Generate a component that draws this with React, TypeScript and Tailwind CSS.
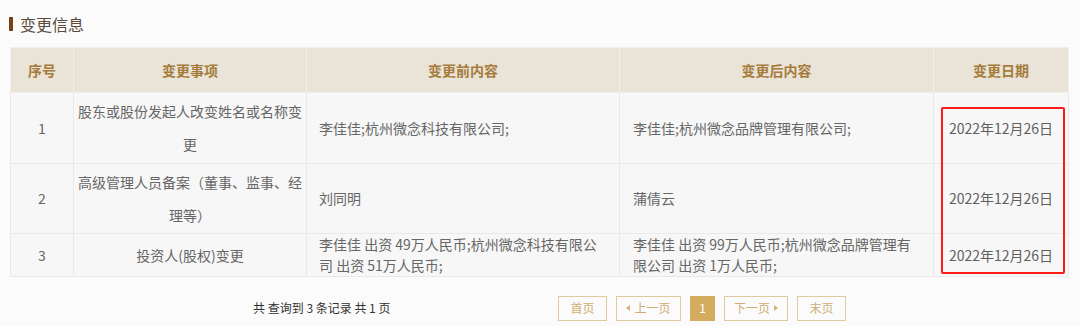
import React from 'react';

const rows = [
  {
    no: '1',
    item: '股东或股份发起人改变姓名或名称变更',
    before: '李佳佳;杭州微念科技有限公司;',
    after: '李佳佳;杭州微念品牌管理有限公司;',
    date: '2022年12月26日',
    h: 'h-[71px]',
  },
  {
    no: '2',
    item: '高级管理人员备案（董事、监事、经理等）',
    before: '刘同明',
    after: '蒲倩云',
    date: '2022年12月26日',
    h: 'h-[70px]',
  },
  {
    no: '3',
    item: '投资人(股权)变更',
    before: '李佳佳 出资 49万人民币;杭州微念科技有限公司 出资 51万人民币;',
    after: '李佳佳 出资 99万人民币;杭州微念品牌管理有限公司 出资 1万人民币;',
    date: '2022年12月26日',
    h: 'h-[43px]',
  },
];

const Arrow: React.FC<{ dir: 'left' | 'right' }> = ({ dir }) => (
  <svg width="4" height="6" viewBox="0 0 4 6" className="fill-[#d2b27a]">
    {dir === 'left' ? <path d="M4 0 L0 3 L4 6 Z" /> : <path d="M0 0 L4 3 L0 6 Z" />}
  </svg>
);

export default function App() {
  return (
    <div
      className="w-[1080px] h-[326px] bg-[#fbfbfb] overflow-hidden"
      style={{ fontFamily: '"Noto Sans CJK SC", "Noto Sans", sans-serif' }}
    >
      {/* Section title */}
      <div className="flex items-center gap-[7px] pl-[9px] pt-[14px] h-[34px]">
        <span className="block w-[4px] h-[14px] bg-[#7b3f12]" />
        <h3 className="text-[16px] leading-[20px] text-[#5a4b3e]">变更信息</h3>
      </div>

      {/* Change table */}
      <div className="relative mx-[10px] mt-[13px] w-[1058px]">
        <table className="w-[1058px] table-fixed border-collapse text-[14px]">
          <colgroup>
            <col className="w-[63px]" />
            <col className="w-[233px]" />
            <col className="w-[313px]" />
            <col className="w-[314px]" />
            <col className="w-[135px]" />
          </colgroup>
          <thead>
            <tr className="h-[45px] bg-[#e9e3d8] text-[#a57b3a] font-bold">
              <th className="border border-[#f3efe8] font-bold">序号</th>
              <th className="border border-[#f3efe8] font-bold">变更事项</th>
              <th className="border border-[#f3efe8] font-bold">变更前内容</th>
              <th className="border border-[#f3efe8] font-bold">变更后内容</th>
              <th className="border border-[#f3efe8] font-bold">变更日期</th>
            </tr>
          </thead>
          <tbody className="bg-[#f7f7f7] text-[#666]">
            {rows.map((r) => (
              <tr key={r.no} className={r.h}>
                <td className="border border-[#e9e9e9] text-center align-middle">{r.no}</td>
                <td className="border border-[#e9e9e9] text-center align-middle px-[2px] leading-[33px]">
                  {r.item}
                </td>
                <td className="border border-[#e9e9e9] align-middle pl-[12px] pr-[16px] leading-[21px]">
                  {r.before}
                </td>
                <td className="border border-[#e9e9e9] align-middle pl-[13px] pr-[18px] leading-[21px]">
                  {r.after}
                </td>
                <td className="border border-[#e9e9e9] text-center align-middle text-[#5f5f5f]">{r.date}</td>
              </tr>
            ))}
          </tbody>
        </table>

        {/* Red highlight annotation */}
        <div className="absolute left-[931px] top-[60px] w-[124px] h-[167px] border-2 border-[#ff1a1a] rounded-[2px] pointer-events-none" />
      </div>

      {/* Pager */}
      <div className="flex items-center mt-[18px] h-[26px] text-[12px]">
        <div className="w-[558px] pl-[253px] text-[#333]">共 查询到 3 条记录 共 1 页</div>
        <div className="flex items-center gap-[9px] text-[#cfae74]">
          <span className="w-[49px] h-[25px] flex items-center justify-center border border-[#e0c99e]">首页</span>
          <span className="w-[65px] h-[25px] flex items-center justify-center gap-[4px] border border-[#e0c99e]">
            <Arrow dir="left" />
            上一页
          </span>
          <span className="w-[25px] h-[25px] flex items-center justify-center bg-[#d4ac5f] text-white">1</span>
          <span className="w-[64px] h-[25px] flex items-center justify-center gap-[4px] border border-[#e0c99e]">
            下一页
            <Arrow dir="right" />
          </span>
          <span className="w-[49px] h-[25px] flex items-center justify-center border border-[#e0c99e]">末页</span>
        </div>
      </div>
    </div>
  );
}
